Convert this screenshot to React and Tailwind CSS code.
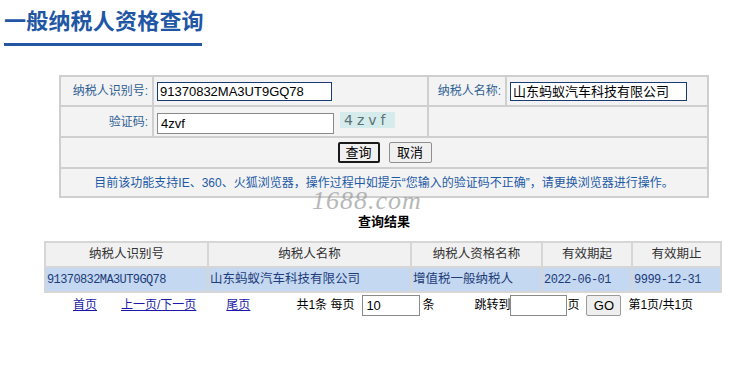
import React from 'react';

const cjk = { fontFamily: '"Liberation Sans", "Noto Sans CJK SC", sans-serif' };
const mono = { fontFamily: '"Liberation Mono", "Noto Sans CJK SC", monospace' };

export default function App() {
  return (
    <div className="w-[748px] h-[390px] bg-white relative overflow-hidden" style={cjk}>
      {/* title */}
      <div className="pt-[7px] pl-[4px]">
        <h1 className="text-[22px] leading-[30px] font-bold text-[#1f57a4] tracking-[0.2px]">一般纳税人资格查询</h1>
        <div className="mt-[6px] w-[198px] h-[3px] bg-[#2457a3]" />
      </div>

      {/* form */}
      <table className="ml-[59px] mt-[29px] w-[650px] border-collapse bg-[#f3f3f3] text-[12px] text-[#2f5f93]">
        <tbody>
          <tr className="h-[30px]">
            <td className="w-[93px] border-2 border-[#cfcfcf] text-right pr-[4px]">纳税人识别号:</td>
            <td className="w-[275px] border-2 border-[#cfcfcf] pl-[3px]">
              <div className="w-[175px] h-[19px] border border-[#1b3b74] bg-white px-[2px] text-[13px] leading-[17px] text-black">91370832MA3UT9GQ78</div>
            </td>
            <td className="w-[78px] border-2 border-[#cfcfcf] text-right pr-[4px]">纳税人名称:</td>
            <td className="border-2 border-[#cfcfcf] pl-[3px]">
              <div className="w-[177px] h-[19px] border border-[#1b3b74] bg-white px-[2px] text-[13px] leading-[17px] text-black">山东蚂蚁汽车科技有限公司</div>
            </td>
          </tr>
          <tr className="h-[31px]">
            <td className="border-2 border-[#cfcfcf] text-right pr-[4px]">验证码:</td>
            <td className="border-2 border-[#cfcfcf] pl-[3px]">
              <div className="flex items-center gap-[6px]">
                <div className="w-[177px] h-[21px] border border-[#8a8a8a] bg-white px-[3px] text-[13px] leading-[19px] text-black mt-[3px]">4zvf</div>
                <div className="w-[55px] h-[16px] -mt-[4px] bg-[#d6ecec] text-[#5b7272] text-[14px] leading-[16px] tracking-[4px] pl-[4px]" style={{ fontFamily: '"DejaVu Sans", sans-serif' }}>4zvf</div>
              </div>
            </td>
            <td colSpan={2} className="border-2 border-[#cfcfcf]" />
          </tr>
          <tr className="h-[31px]">
            <td colSpan={4} className="border-2 border-[#cfcfcf]">
              <div className="flex justify-center gap-[9px] pl-[1px]">
                <button className="w-[42px] h-[21px] border-2 border-[#1a1a1a] rounded-[2px] bg-[#f0f0f0] text-[13px] leading-[16px] text-black">查询</button>
                <button className="w-[43px] h-[21px] border border-[#8f8f8f] rounded-[2px] bg-[#f0f0f0] text-[13px] leading-[18px] text-black">取消</button>
              </div>
            </td>
          </tr>
          <tr className="h-[29px]">
            <td colSpan={4} className="border-2 border-[#cfcfcf] text-center text-[12px] text-[#1d5aa6]">
              目前该功能支持IE、360、火狐浏览器，操作过程中如提示“您输入的验证码不正确”，请更换浏览器进行操作。
            </td>
          </tr>
        </tbody>
      </table>

      {/* watermark */}
      <div className="absolute left-[312px] top-[191px] text-[26px] leading-[20px] italic text-[#9a9a9a] opacity-70 tracking-[1px]" style={{ fontFamily: '"Liberation Serif", serif' }}>1688.com</div>

      <div className="mt-[15px] text-center pl-[20px] text-[13px] font-bold text-black leading-[18px]">查询结果</div>

      {/* results */}
      <table className="ml-[44px] mt-[10px] w-[678px] border-collapse text-[12.5px]">
        <tbody>
          <tr className="h-[25px] bg-[#f1f1f1] text-[#333]">
            <td className="w-[163px] border-2 border-[#d6d6d6] text-center">纳税人识别号</td>
            <td className="w-[203px] border-2 border-[#d6d6d6] text-center">纳税人名称</td>
            <td className="w-[131px] border-2 border-[#d6d6d6] text-center">纳税人资格名称</td>
            <td className="w-[90px] border-2 border-[#d6d6d6] text-center">有效期起</td>
            <td className="border-2 border-[#d6d6d6] text-center">有效期止</td>
          </tr>
          <tr className="h-[25px] bg-[#c4d8f2] text-[#1d3c78]">
            <td className="border-2 border-[#d6d6d6] pl-[1px] text-[12px] tracking-[-0.6px]" style={mono}>91370832MA3UT9GQ78</td>
            <td className="border-2 border-[#d6d6d6] pl-[1px]">山东蚂蚁汽车科技有限公司</td>
            <td className="border-2 border-[#d6d6d6] pl-[1px]">增值税一般纳税人</td>
            <td className="border-2 border-[#d6d6d6] pl-[1px] text-[12px] tracking-[-0.5px]" style={mono}>2022-06-01</td>
            <td className="border-2 border-[#d6d6d6] pl-[1px] text-[12px] tracking-[-0.5px]" style={mono}>9999-12-31</td>
          </tr>
        </tbody>
      </table>

      {/* pager */}
      <div className="flex items-center h-[22px] mt-[1px] text-[12px] text-black">
        <a className="ml-[73px] text-[#1a1aa6] underline">首页</a>
        <a className="ml-[24px] text-[#1a1aa6] underline">上一页/下一页</a>
        <a className="ml-[30px] text-[#1a1aa6] underline">尾页</a>
        <span className="ml-[46px]">共1条 每页</span>
        <div className="ml-[8px] w-[58px] h-[21px] border border-[#8a8a8a] bg-white px-[3px] text-[13px] leading-[19px]">10</div>
        <span className="ml-[2px]">条</span>
        <span className="ml-[40px]">跳转到</span>
        <div className="w-[57px] h-[21px] border border-[#8a8a8a] bg-white" />
        <span>页</span>
        <button className="ml-[7px] w-[35px] h-[21px] border border-[#9a9a9a] rounded-[2px] bg-[#eeeeee] text-[13px] leading-[19px]">GO</button>
        <span className="ml-[7px]">第1页/共1页</span>
      </div>
    </div>
  );
}
